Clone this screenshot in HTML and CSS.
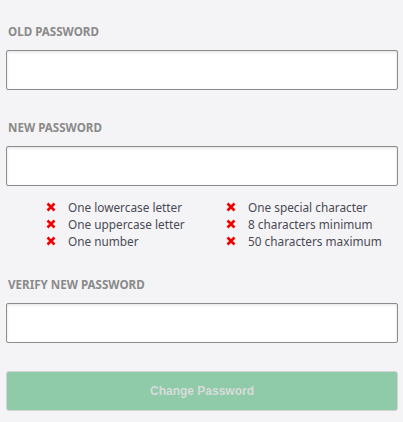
FILE: index.html
```html
<!DOCTYPE html>
<html>
<head>
<meta charset="utf-8">
<link rel="stylesheet" href="styles.css">
</head>
<body>
<form class="form">
  <div class="field">
    <label class="label">OLD PASSWORD</label>
    <input class="input" type="password">
  </div>
  <div class="field">
    <label class="label">NEW PASSWORD</label>
    <input class="input" type="password">
    <ul class="rules">
      <li class="rule"><svg class="x" viewBox="0 0 10 10"><path d="M1.5 1.5L8.5 8.5M8.5 1.5L1.5 8.5"/></svg>One lowercase letter</li>
      <li class="rule"><svg class="x" viewBox="0 0 10 10"><path d="M1.5 1.5L8.5 8.5M8.5 1.5L1.5 8.5"/></svg>One special character</li>
      <li class="rule"><svg class="x" viewBox="0 0 10 10"><path d="M1.5 1.5L8.5 8.5M8.5 1.5L1.5 8.5"/></svg>One uppercase letter</li>
      <li class="rule"><svg class="x" viewBox="0 0 10 10"><path d="M1.5 1.5L8.5 8.5M8.5 1.5L1.5 8.5"/></svg>8 characters minimum</li>
      <li class="rule"><svg class="x" viewBox="0 0 10 10"><path d="M1.5 1.5L8.5 8.5M8.5 1.5L1.5 8.5"/></svg>One number</li>
      <li class="rule"><svg class="x" viewBox="0 0 10 10"><path d="M1.5 1.5L8.5 8.5M8.5 1.5L1.5 8.5"/></svg>50 characters maximum</li>
    </ul>
  </div>
  <div class="field">
    <label class="label">VERIFY NEW PASSWORD</label>
    <input class="input" type="password">
  </div>
  <button class="btn" type="button" disabled>Change Password</button>
</form>
</body>
</html>
```
FILE: styles.css
```css
html, body {
  margin: 0;
  padding: 0;
  background: #f4f4f6;
}
body {
  font-family: "Noto Sans", "DejaVu Sans", sans-serif;
}
.form {
  display: flex;
  flex-direction: column;
  padding: 24px 5px 0 6px;
}
.field {
  display: flex;
  flex-direction: column;
  margin-bottom: 30px;
}
.field:nth-child(2) {
  margin-bottom: 28px;
}
.field:nth-child(3) {
  margin-bottom: 28px;
}
.label {
  display: block;
  height: 16px;
  line-height: 16px;
  font-size: 11.6px;
  font-weight: 700;
  color: #8a8a8a;
  padding-left: 2px;
  margin-bottom: 10px;
}
.input {
  box-sizing: border-box;
  height: 40px;
  width: 100%;
  margin: 0;
  border: 1px solid #8c8c8c;
  border-radius: 2px;
  background: #fff;
  box-shadow: inset 0 1px 3px rgba(0,0,0,0.12);
  outline: none;
}
.rules {
  list-style: none;
  margin: 12px 0 0;
  padding: 0 0 0 40px;
  display: grid;
  grid-template-columns: 180px auto;
}
.rule {
  display: flex;
  align-items: center;
  height: 17px;
  font-size: 11.8px;
  color: #4a4a55;
  white-space: nowrap;
}
.x {
  width: 10px;
  height: 10px;
  margin-right: 12px;
  flex: none;
}
.x path {
  stroke: #f20000;
  stroke-width: 2.6;
  fill: none;
}
.btn {
  box-sizing: border-box;
  height: 40px;
  width: 100%;
  border: 1px solid #d3d3d3;
  border-radius: 3px;
  background: #8fcaa9;
  color: #d7dcd9;
  font-family: "Liberation Sans", Arial, sans-serif;
  font-weight: 700;
  font-size: 12px;
}
```
